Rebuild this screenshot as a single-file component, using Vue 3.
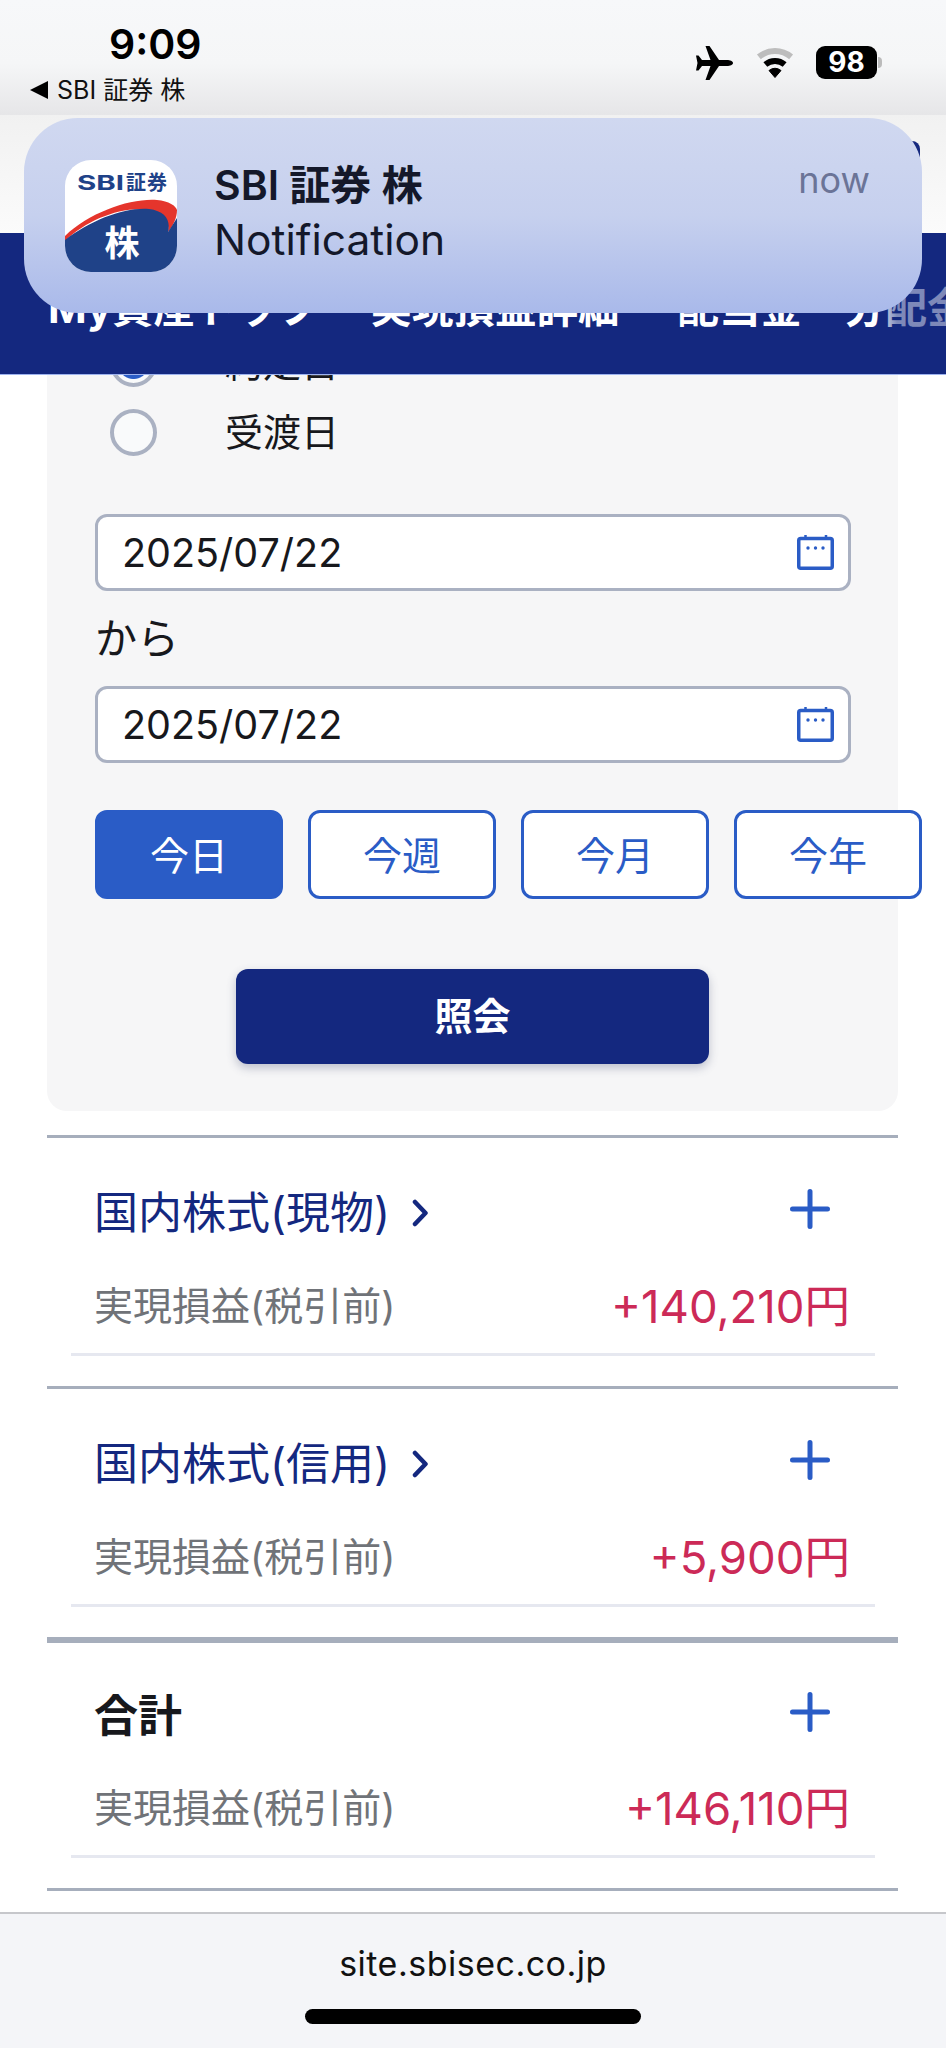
<script setup>
const tabs = ['My資産トップ', '実現損益詳細', '配当金', '分配金']
const ranges = ['今日', '今週', '今月', '今年']
const dates = ['2025/07/22', '2025/07/22']
const sections = [
  { title: '国内株式(現物)', value: '+140,210円', link: true },
  { title: '国内株式(信用)', value: '+5,900円', link: true },
  { title: '合計', value: '+146,110円', link: false, total: true }
]
</script>

<template>
  <div class="screen">
    <header class="status">
      <div class="status-left">
        <div class="time">9:09</div>
        <div class="back"><span class="back-arrow"></span>SBI 証券 株</div>
      </div>
      <div class="status-right">
        <svg class="plane" viewBox="0 0 37 34" width="37" height="34">
          <path d="M37 17C37 15 34 14 31 14H23L13.5 0H9.5L14.5 14H6L2.5 9.5H0L1.5 17L0 24.5H2.5L6 20H14.5L9.5 34H13.5L23 20H31C34 20 37 19 37 17Z" fill="#000" />
        </svg>
        <svg class="wifi" viewBox="0 0 40 31" width="40" height="31">
          <path d="M3.9 9.85A25 25 0 0 1 36.1 9.85" fill="none" stroke="#bdbdbd" stroke-width="6" />
          <path d="M10.35 17.5A15 15 0 0 1 29.65 17.5" fill="none" stroke="#000" stroke-width="6" />
          <path d="M20 30.5L14 23.5Q20 19 26 23.5Z" fill="#000" stroke="#000" stroke-linejoin="round" />
        </svg>
        <div class="battery"><span class="battery-level">98</span><span class="battery-nub"></span></div>
      </div>
    </header>

    <div class="topbar"><span class="topbar-mark"></span></div>

    <nav class="tabs">
      <span v-for="tab in tabs" :key="tab" class="tab">{{ tab }}</span>
    </nav>

    <main class="content">
      <section class="panel">
        <div class="radios">
          <label class="radio-row">
            <span class="radio radio-on"></span>
            <span class="radio-label">約定日</span>
          </label>
          <label class="radio-row">
            <span class="radio"></span>
            <span class="radio-label">受渡日</span>
          </label>
        </div>

        <template v-for="(date, i) in dates" :key="i">
          <div class="date-input">
            <span>{{ date }}</span>
            <svg viewBox="0 0 37 35" width="37" height="35">
              <rect x="1.75" y="3.5" width="33.5" height="29.75" rx="2" fill="none" stroke="#2a5cc6" stroke-width="3.5" />
              <path d="M8.5 0V5M29 0V5" stroke="#2a5cc6" stroke-width="2.5" />
              <circle cx="11" cy="13" r="1.7" fill="#2a5cc6" />
              <circle cx="18.5" cy="13" r="1.7" fill="#2a5cc6" />
              <circle cx="26" cy="13" r="1.7" fill="#2a5cc6" />
            </svg>
          </div>
          <div v-if="i === 0" class="kara">から</div>
        </template>

        <div class="ranges">
          <button v-for="(r, i) in ranges" :key="r" class="range" :class="{ 'range-on': i === 0 }">{{ r }}</button>
        </div>

        <button class="submit">照会</button>
      </section>

      <section
        v-for="s in sections"
        :key="s.title"
        class="block"
      >
        <div class="rule" :class="{ 'rule-thick': s.total }"></div>
        <div class="block-head">
          <div class="block-title" :class="{ 'block-title-total': s.total }">
            <span>{{ s.title }}</span>
            <svg v-if="s.link" class="chevron" viewBox="0 0 17 28" width="17" height="28">
              <path d="M3 3L13.5 14L3 25" fill="none" stroke="#14287f" stroke-width="4.5" stroke-linecap="round" stroke-linejoin="round" />
            </svg>
          </div>
          <svg class="plus" viewBox="0 0 40 40" width="40" height="40">
            <path d="M20 2.5V37.5M2.5 20H37.5" fill="none" stroke="#2a5cc6" stroke-width="5" stroke-linecap="round" />
          </svg>
        </div>
        <div class="block-row">
          <span class="row-label">実現損益(税引前)</span>
          <span class="row-value">{{ s.value }}</span>
        </div>
      </section>
      <div class="rule"></div>
    </main>

    <footer class="toolbar">
      <div class="url">site.sbisec.co.jp</div>
      <div class="home"></div>
    </footer>

    <aside class="notice">
      <svg class="app-icon" viewBox="0 0 112 112" width="112" height="112">
        <defs>
          <clipPath id="icon-clip"><rect width="112" height="112" rx="26" /></clipPath>
        </defs>
        <g clip-path="url(#icon-clip)">
          <rect width="112" height="112" fill="#fff" />
          <path d="M0 76C25 52 66 38 92 40C104 41 111 46 112 50C112 58 108 66 103 72C105 60 98 52 84 50C56 46 22 60 0 81Z" fill="#e5352c" />
          <path d="M0 80C26 60 60 47 84 49C100 51 106 60 103 72L112 58V112H0Z" fill="#1f4288" />
          <text x="12" y="30" textLength="47" lengthAdjust="spacingAndGlyphs" class="icon-brand">SBI</text>
          <text x="61" y="30" textLength="41" lengthAdjust="spacing" class="icon-brand">証券</text>
          <text x="57" y="96" text-anchor="middle" class="icon-kanji">株</text>
        </g>
      </svg>
      <div class="notice-text">
        <div class="notice-title">SBI 証券 株</div>
        <div class="notice-body">Notification</div>
      </div>
      <div class="notice-time">now</div>
    </aside>
  </div>
</template>

<style>
html, body { margin: 0; background: #fff; }
</style>

<style scoped>
.screen {
  position: relative;
  width: 946px;
  height: 2048px;
  overflow: hidden;
  display: flex;
  flex-direction: column;
  background: #fff;
  color: #17181c;
  font-family: Inter, "Noto Sans CJK JP", sans-serif;
}

/* status bar */
.status {
  height: 115px;
  flex: none;
  box-sizing: border-box;
  padding: 26px 69px 0 30px;
  display: flex;
  justify-content: space-between;
  background: linear-gradient(#f7f8fa 0%, #f5f6f7 55%, #e6e6e8 100%);
}
.time {
  margin-left: 79px;
  font-size: 41px;
  font-weight: 600;
  line-height: 36px;
  color: #000;
}
.back {
  margin-top: 14px;
  display: flex;
  align-items: center;
  gap: 9px;
  font-size: 25px;
  line-height: 28px;
  white-space: pre;
  color: #111;
}
.back-arrow {
  width: 0;
  height: 0;
  border-style: solid;
  border-width: 9px 18px 9px 0;
  border-color: transparent #000 transparent transparent;
}
.status-right {
  display: flex;
  align-items: flex-start;
  padding-top: 20px;
}
.plane { margin-right: 22px; }
.wifi { margin-right: 21px; margin-top: 1px; }
.battery {
  position: relative;
  width: 61px;
  height: 33px;
  border-radius: 9px;
  background: #000;
  display: flex;
  align-items: center;
  justify-content: center;
}
.battery-level {
  color: #fff;
  font-size: 28px;
  font-weight: 700;
  line-height: 33px;
}
.battery-nub {
  position: absolute;
  right: -5px;
  top: 11px;
  width: 4px;
  height: 11px;
  border-radius: 0 6px 6px 0;
  background: #bbb;
}

/* page header */
.topbar {
  position: relative;
  z-index: 2;
  height: 118px;
  flex: none;
  background: linear-gradient(#f1f1f1, #fbfbfb);
}
.topbar-mark {
  position: absolute;
  left: 904px;
  top: 26px;
  width: 16px;
  height: 24px;
  border-radius: 8px;
  background: #14287f;
}
.tabs {
  position: relative;
  z-index: 2;
  height: 142px;
  flex: none;
  box-sizing: border-box;
  padding: 47px 0 0 48px;
  display: flex;
  gap: 58px;
  overflow: hidden;
  background: #14287f;
  border-bottom: 1px solid #9db2ee;
}
.tabs::after {
  content: "";
  position: absolute;
  right: 0;
  top: 0;
  bottom: 0;
  width: 70px;
  background: linear-gradient(90deg, rgba(20, 40, 127, 0), rgba(20, 40, 127, 0.55) 30%);
}
.tab {
  flex: none;
  color: #fff;
  font-size: 41.5px;
  font-weight: 700;
  line-height: 56px;
  white-space: nowrap;
}
.tab:nth-child(2) { margin-left: -7px; }
.tab:last-child { margin-left: -16px; }

/* body */
.content {
  flex: 1;
  min-height: 0;
  padding: 0 48px 0 47px;
}
.panel {
  display: flow-root;
  box-sizing: border-box;
  height: 736px;
  padding: 0 47px 0 48px;
  border-radius: 0 0 20px 20px;
  background: #f6f6f7;
}
.radios {
  margin-top: -35px;
  padding-left: 15px;
  display: flex;
  flex-direction: column;
  gap: 22px;
}
.radio-row {
  display: flex;
  align-items: center;
  gap: 68px;
  height: 47px;
}
.radio {
  box-sizing: border-box;
  width: 47px;
  height: 47px;
  border: 4px solid #aab1c2;
  border-radius: 50%;
  background: #f9fafb;
  display: block;
}
.radio-on {
  background: radial-gradient(circle, #2a5cc6 0 15px, #f9fafb 16px);
}
.radio-label {
  font-size: 38px;
  line-height: 47px;
}
.date-input {
  box-sizing: border-box;
  height: 77px;
  padding: 0 14px 0 24px;
  border: 3px solid #aab1c2;
  border-radius: 12px;
  background: #fff;
  display: flex;
  align-items: center;
  justify-content: space-between;
  font-size: 39.5px;
}
.radios + .date-input { margin-top: 58px; }
.kara {
  height: 95px;
  font-size: 42px;
  line-height: 95px;
}
.ranges {
  margin-top: 47px;
  width: 827px;
  display: grid;
  grid-template-columns: repeat(4, 188px);
  gap: 25px;
}
.range {
  box-sizing: border-box;
  height: 89px;
  padding: 0 0 3px;
  border: 3px solid #2a5cc6;
  border-radius: 12px;
  background: #fff;
  color: #2a5cc6;
  font: inherit;
  font-size: 39px;
}
.range-on {
  background: #2a5cc6;
  color: #fff;
}
.submit {
  display: block;
  width: 473px;
  height: 95px;
  margin: 70px 0 0 141px;
  padding: 0 0 6px;
  border: 0;
  border-radius: 12px;
  background: #14287f;
  box-shadow: 0 4px 10px rgba(60, 70, 110, 0.3);
  color: #fff;
  font: inherit;
  font-size: 38px;
  font-weight: 700;
}

/* result blocks */
.block {
  height: 251px;
  display: flex;
  flex-direction: column;
}
.panel + .block { margin-top: 24px; }
.rule {
  flex: none;
  height: 3px;
  background: #a6aebc;
}
.rule-thick { height: 6px; }
.block-head {
  flex: 1;
  padding: 20px 49px 0 47px;
  display: flex;
  align-items: center;
  justify-content: space-between;
}
.block-title {
  display: flex;
  align-items: center;
  gap: 22px;
  margin-top: 8px;
  color: #14287f;
  font-size: 44px;
  line-height: 56px;
}
.block-title-total {
  color: #17181c;
  font-weight: 700;
}
.plus { margin-right: 19px; }
.block-row {
  flex: none;
  box-sizing: content-box;
  height: 88px;
  margin: 0 23px 30px 24px;
  padding: 0 25px 6px 23px;
  border-bottom: 3px solid #e6e8f0;
  display: flex;
  align-items: center;
  justify-content: space-between;
}
.row-label {
  color: #707378;
  font-size: 39px;
}
.row-value {
  color: #cc2a57;
  font-size: 45.5px;
}

/* browser bar */
.toolbar {
  flex: none;
  height: 136px;
  box-sizing: border-box;
  border-top: 2px solid #c6c7cb;
  background: #f4f5f8;
  display: flex;
  flex-direction: column;
  align-items: center;
}
.url {
  margin-top: 26px;
  font-size: 34px;
  line-height: 48px;
  letter-spacing: 0.5px;
  color: #111;
}
.home {
  margin-top: 21px;
  width: 336px;
  height: 15px;
  border-radius: 8px;
  background: #000;
}

/* notification */
.notice {
  position: absolute;
  z-index: 3;
  left: 24px;
  top: 118px;
  width: 898px;
  height: 195px;
  box-sizing: border-box;
  padding: 42px 0 0 41px;
  border-radius: 54px;
  background: linear-gradient(#d0d8f0 0%, #c6d0ee 50%, #a9b9ea 100%);
  display: flex;
  align-items: flex-start;
}
.app-icon { flex: none; }
.icon-brand {
  fill: #1f4288;
  font-size: 20px;
  font-weight: 700;
}
.icon-kanji {
  fill: #fff;
  font-size: 35px;
  font-weight: 700;
}
.notice-text {
  margin-left: 37px;
  flex: 1;
}
.notice-title {
  font-size: 41px;
  font-weight: 600;
  line-height: 50px;
  white-space: pre;
  color: #14182a;
}
.notice-body {
  margin-top: 5px;
  font-size: 42.5px;
  line-height: 50px;
  color: #14182a;
}
.notice-time {
  margin-top: -3px;
  margin-right: 52px;
  font-size: 36px;
  line-height: 46px;
  color: #6b7497;
}
</style>
